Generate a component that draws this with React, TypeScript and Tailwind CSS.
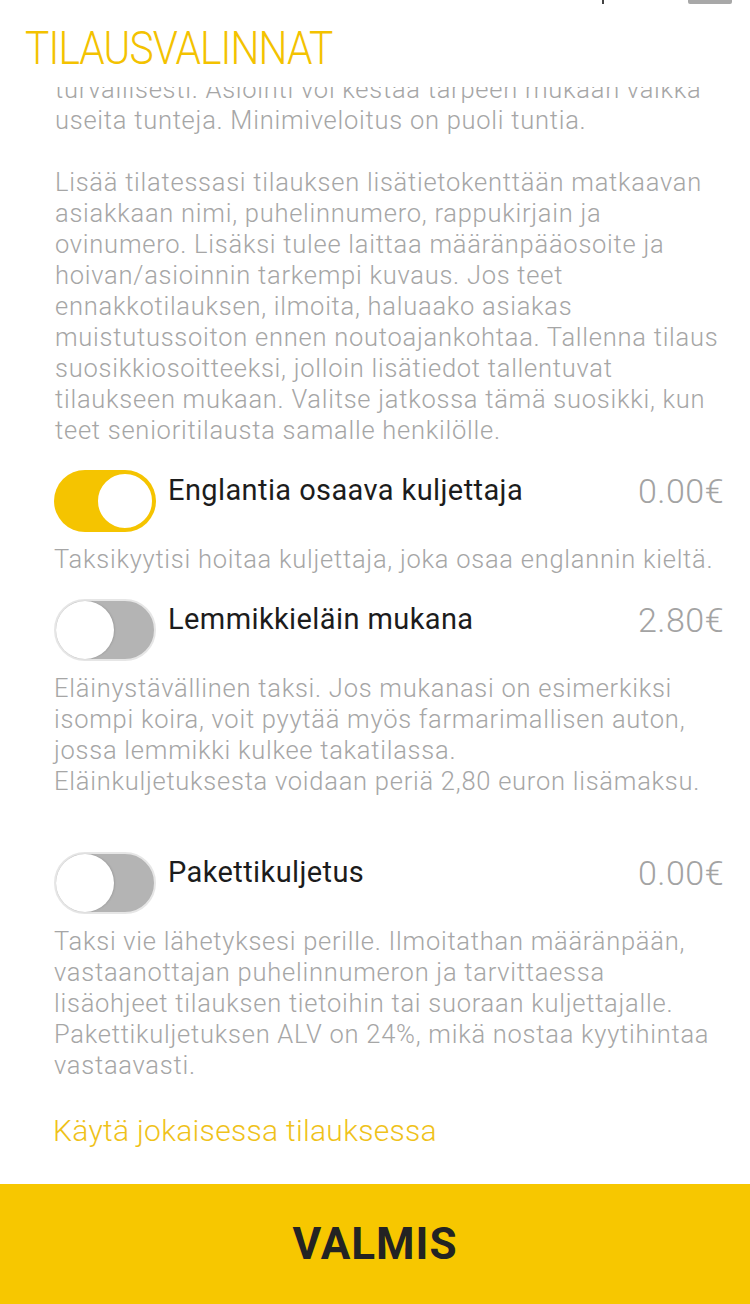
import type { ReactNode } from 'react';

const FONT = "font-['Roboto','Liberation_Sans',sans-serif]";

interface ToggleProps {
  on: boolean;
}

function Toggle({ on }: ToggleProps): JSX.Element {
  if (on) {
    return (
      <div className="flex h-[62px] w-[102px] shrink-0 items-center justify-end rounded-full bg-[#f5c400] p-[2px]">
        <div className="h-[58px] w-[58px] rounded-full border-2 border-[#f5c400] bg-white" />
      </div>
    );
  }
  return (
    <div className="flex h-[62px] w-[102px] shrink-0 items-center rounded-full border-2 border-[#e6e6e6] bg-[#b4b4b4]">
      <div className="h-[58px] w-[58px] rounded-full bg-white shadow-[1px_0_2px_rgba(0,0,0,0.12)]" />
    </div>
  );
}

function Lines({ lines }: { lines: string[] }): JSX.Element {
  return (
    <div className="text-[25.5px] font-light leading-[31px] tracking-[0.75px] text-[#a6a6a6]">
      {lines.map((l, i) => (
        <div key={i} className="h-[31px] whitespace-nowrap">
          {l}
        </div>
      ))}
    </div>
  );
}

interface OptionProps {
  on: boolean;
  label: string;
  price: string;
  children: ReactNode;
}

function Option({ on, label, price, children }: OptionProps): JSX.Element {
  return (
    <div className="mt-[24px]">
      <div className="flex h-[62px] items-center">
        <Toggle on={on} />
        <div className="-mt-[20px] flex flex-1 items-center">
          <span className="ml-[12px] flex-1 text-[29px] tracking-[0.4px] text-[#1c1c1c]">{label}</span>
          <span className="pr-[26px] text-[34px] font-light tracking-[0.5px] text-[#a3a3a3]">{price}</span>
        </div>
      </div>
      <div className="mt-[12px]">{children}</div>
    </div>
  );
}

export default function App(): JSX.Element {
  return (
    <div className={`relative flex h-[1304px] w-[750px] flex-col overflow-hidden bg-white ${FONT}`}>
      <div className="absolute right-[18px] top-0 h-[4px] w-[44px] rounded-b-[2px] bg-[#a8a8a8]" />
      <div className="absolute left-[602px] top-0 h-[4px] w-[2px] bg-[#444]" />

      <div className="h-[87px] shrink-0 pl-[25px] pt-[24px]">
        <h1 className="inline-block origin-left scale-x-[0.885] text-[46px] font-light leading-[48px] tracking-[-1px] text-[#f3c200]">
          TILAUSVALINNAT
        </h1>
      </div>

      <div className="flex-1 overflow-hidden pl-[55px]">
        <div className="-mt-[13px]">
          <Lines
            lines={[
              'turvallisesti. Asiointi voi kestää tarpeen mukaan vaikka',
              'useita tunteja. Minimiveloitus on puoli tuntia.',
            ]}
          />
          <div className="mt-[31px]">
            <Lines
              lines={[
                'Lisää tilatessasi tilauksen lisätietokenttään matkaavan',
                'asiakkaan nimi, puhelinnumero, rappukirjain ja',
                'ovinumero. Lisäksi tulee laittaa määränpääosoite ja',
                'hoivan/asioinnin tarkempi kuvaus. Jos teet',
                'ennakkotilauksen, ilmoita, haluaako asiakas',
                'muistutussoiton ennen noutoajankohtaa. Tallenna tilaus',
                'suosikkiosoitteeksi, jolloin lisätiedot tallentuvat',
                'tilaukseen mukaan. Valitse jatkossa tämä suosikki, kun',
                'teet senioritilausta samalle henkilölle.',
              ]}
            />
          </div>
        </div>

        <div className="-ml-[1px]">
          <Option on label="Englantia osaava kuljettaja" price="0.00€">
            <Lines lines={['Taksikyytisi hoitaa kuljettaja, joka osaa englannin kieltä.']} />
          </Option>
          <Option on={false} label="Lemmikkieläin mukana" price="2.80€">
            <Lines
              lines={[
                'Eläinystävällinen taksi. Jos mukanasi on esimerkiksi',
                'isompi koira, voit pyytää myös farmarimallisen auton,',
                'jossa lemmikki kulkee takatilassa.',
                'Eläinkuljetuksesta voidaan periä 2,80 euron lisämaksu.',
                '',
              ]}
            />
          </Option>
          <Option on={false} label="Pakettikuljetus" price="0.00€">
            <Lines
              lines={[
                'Taksi vie lähetyksesi perille. Ilmoitathan määränpään,',
                'vastaanottajan puhelinnumeron ja tarvittaessa',
                'lisäohjeet tilauksen tietoihin tai suoraan kuljettajalle.',
                'Pakettikuljetuksen ALV on 24%, mikä nostaa kyytihintaa',
                'vastaavasti.',
              ]}
            />
          </Option>
        </div>

        <div className="-ml-[2px] mt-[32px] text-[30px] font-light leading-[36px] tracking-[0.3px] text-[#efc21a]">
          Käytä jokaisessa tilauksessa
        </div>
      </div>

      <button className="flex h-[120px] shrink-0 items-center justify-center bg-[#f7c700]">
        <span className="text-[44px] font-bold tracking-[1px] text-[#232323]">VALMIS</span>
      </button>
    </div>
  );
}
